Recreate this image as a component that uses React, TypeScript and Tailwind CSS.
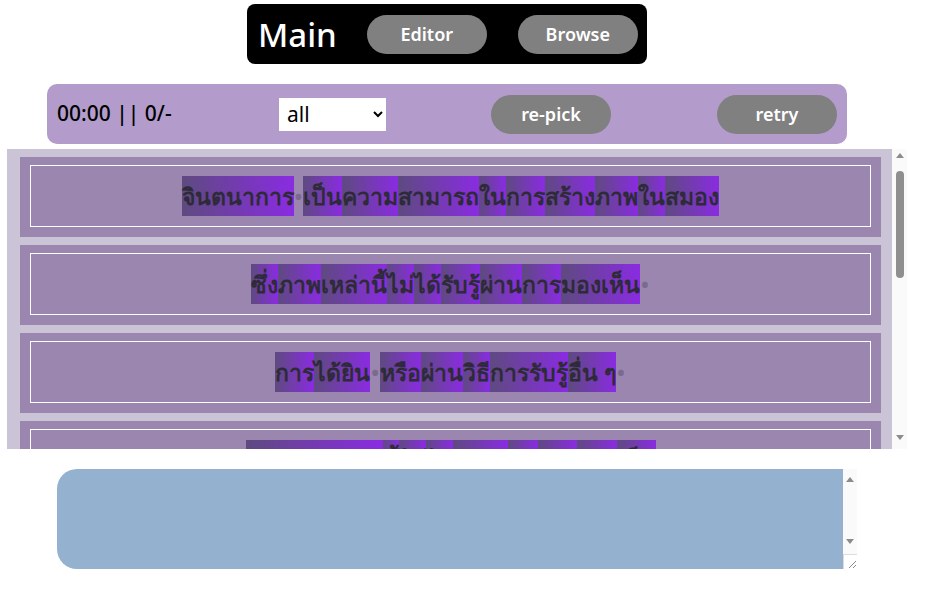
import React from "react";

const rows: string[][] = [
  ["จินตนาการ", "•", "เป็น", "ความ", "สามารถ", "ใน", "การ", "สร้าง", "ภาพ", "ใน", "สมอง"],
  ["ซึ่ง", "ภาพ", "เหล่านี้", "ไม่", "ได้", "รับรู้", "ผ่าน", "การ", "มองเห็น", "•"],
  ["การ", "ได้ยิน", "•", "หรือ", "ผ่าน", "วิธี", "การรับรู้", "อื่น ๆ", "•"],
  ["ความสามารถ", "นี้", "ไม่", "ได้", "จำกัด", "แค่", "การ", "มอง", "เห็น"],
  ["แต่", "ยัง", "รวม", "ถึง", "การ", "สร้าง", "ความคิด", "ใหม่", "•"],
  ["จินตนาการ", "ช่วย", "ให้", "เรา", "แก้", "ปัญหา", "ได้", "•"],
  ["และ", "สร้างสรรค์", "สิ่ง", "ใหม่", "ๆ", "ใน", "ชีวิต", "•"],
  ["ทุก", "คน", "มี", "จินตนาการ", "•"],
];

const fontStack = { fontFamily: '"Noto Sans", "Open Sans", sans-serif' };

const Word = ({ text }: { text: string }) => {
  if (text === "•") {
    return <span className="inline-block h-10 leading-10 text-[#7a6a8f] text-[26px] font-normal">•</span>;
  }
  return (
    <span className="inline-block h-10 leading-10 whitespace-pre bg-[linear-gradient(to_right,#5e4a80,#8a2be2)]">
      {text}
    </span>
  );
};

const UpArrow = () => (
  <div className="w-0 h-0 border-x-4 border-x-transparent border-b-[5px] border-b-[#8c8c8c]" />
);
const DownArrow = () => (
  <div className="w-0 h-0 border-x-4 border-x-transparent border-t-[5px] border-t-[#8c8c8c]" />
);

const App = () => {
  return (
    <div className="w-[929px] h-[609px] bg-white overflow-hidden" style={fontStack}>
      {/* top nav */}
      <div className="ml-[247px] mt-1 w-[400px] h-[60px] bg-black rounded-lg flex items-center pl-[11px]">
        <span className="text-white text-[33px] font-medium leading-none">Main</span>
        <button className="ml-[30px] w-[120px] h-[39px] rounded-full bg-[#808080] text-white text-lg font-semibold">
          Editor
        </button>
        <button className="ml-[31px] w-[120px] h-[39px] rounded-full bg-[#808080] text-white text-lg font-semibold">
          Browse
        </button>
      </div>

      {/* controls */}
      <div className="ml-[47px] mt-5 w-[800px] h-[60px] bg-[#b39ccb] rounded-[10px] flex items-center">
        <div className="w-[232px] pl-[10px] text-[21px] font-medium text-black">00:00 || 0/-</div>
        <select className="w-[107px] h-[33px] bg-white text-black text-[21px] px-1 border-0 outline-none">
          <option>all</option>
        </select>
        <button className="ml-[105px] w-[120px] h-[39px] rounded-full bg-[#808080] text-white text-lg font-semibold">
          re-pick
        </button>
        <button className="ml-[106px] w-[120px] h-[39px] rounded-full bg-[#808080] text-white text-lg font-semibold">
          retry
        </button>
      </div>

      {/* sentence list */}
      <div className="ml-[7px] mt-[5px] w-[900px] h-[300px] flex">
        <div className="flex-1 overflow-hidden bg-[#cbc3d6] pl-[13px] pr-[11px] py-2 flex flex-col gap-2">
          {rows.map((row, i) => (
            <div key={i} className="shrink-0 bg-[#9a86ae] pt-2 pb-2.5 px-2.5">
              <div className="border border-white py-[10px] flex flex-wrap justify-center items-center text-[23px] font-bold text-[#2e2b38]">
                {row.map((w, j) => (
                  <Word key={j} text={w} />
                ))}
              </div>
            </div>
          ))}
        </div>
        {/* scrollbar */}
        <div className="w-[15px] bg-[#fafafa] flex flex-col items-center pt-[4px] pb-[9px]">
          <UpArrow />
          <div className="mt-[13px] w-[8px] h-[107px] rounded-full bg-[#8f8f8f]" />
          <div className="flex-1" />
          <DownArrow />
        </div>
      </div>

      {/* notes */}
      <div className="ml-[57px] mt-5 w-[800px] h-[100px] flex">
        <textarea className="flex-1 h-full bg-[#94b2cf] rounded-l-[20px] resize-none border-0 outline-none p-2" />
        <div className="w-[14px] bg-[#fafafa] flex flex-col items-center">
          <div className="pt-[8px]">
            <UpArrow />
          </div>
          <div className="flex-1" />
          <div className="pb-[10px]">
            <DownArrow />
          </div>
          <div className="w-full h-[15px] border-t border-l border-[#dcdcdc] bg-white flex items-end justify-end">
            <svg width="10" height="10" viewBox="0 0 10 10">
              <line x1="9" y1="2" x2="2" y2="9" stroke="#8a8a8a" strokeWidth="1" />
              <line x1="9" y1="6" x2="6" y2="9" stroke="#8a8a8a" strokeWidth="1" />
            </svg>
          </div>
        </div>
      </div>
    </div>
  );
};

export default App;
